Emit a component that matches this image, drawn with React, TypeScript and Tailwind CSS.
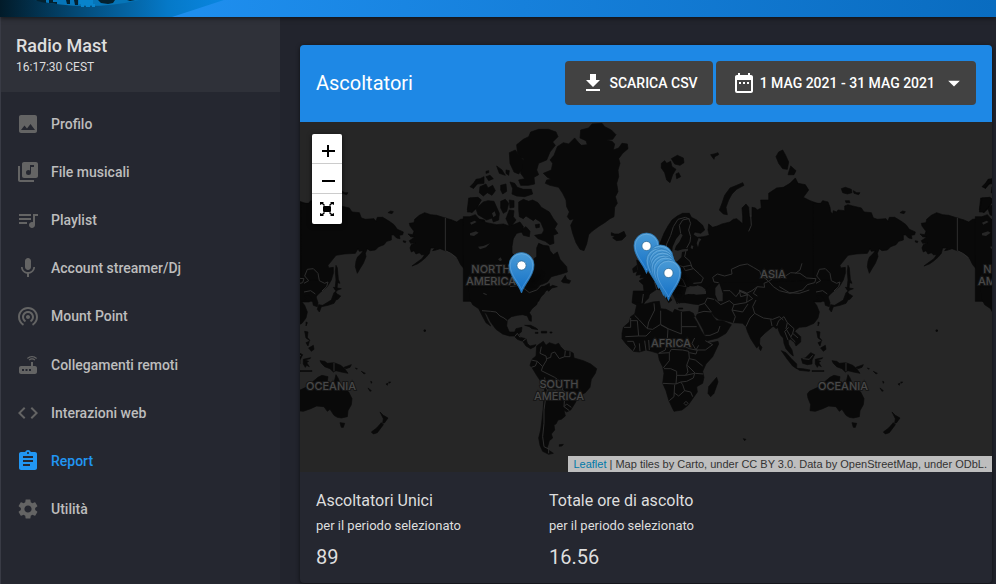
import type { ComponentType } from "react";
import {
  MdArrowDropDown,
  MdAssignment,
  MdCode,
  MdDateRange,
  MdGetApp,
  MdImage,
  MdLibraryMusic,
  MdMic,
  MdQueueMusic,
  MdRouter,
  MdSettings,
  MdWifiTethering,
} from "react-icons/md";

type IconType = ComponentType<{ className?: string }>;

const menu: { label: string; Icon: IconType; active?: boolean }[] = [
  { label: "Profilo", Icon: MdImage },
  { label: "File musicali", Icon: MdLibraryMusic },
  { label: "Playlist", Icon: MdQueueMusic },
  { label: "Account streamer/Dj", Icon: MdMic },
  { label: "Mount Point", Icon: MdWifiTethering },
  { label: "Collegamenti remoti", Icon: MdRouter },
  { label: "Interazioni web", Icon: MdCode },
  { label: "Report", Icon: MdAssignment, active: true },
  { label: "Utilità", Icon: MdSettings },
];

const stats = [
  { title: "Ascoltatori Unici", value: "89" },
  { title: "Totale ore di ascolto", value: "16.56" },
];

interface Tile {
  x: number;
  y: number;
  land: string[];
  water?: string[];
  borders?: string[];
}

// Each tile is drawn at three units per map pixel, from its own top left corner.
const tiles: Tile[] = [
  {
    // Canada, Greenland, Iceland
    x: 470,
    y: 120,
    land: [
      "220,160 244,150 248,130 240,120 252,106 262,80 280,68 296,72 314,54 326,68 334,76 352,74 348,62 330,54 332,30 356,24 366,12 396,10 404,20 424,30 438,44 428,58 408,60 426,64 434,72 430,90 446,84 456,70 472,72 474,86 458,100 446,116 450,130 444,150 446,170 440,190 444,215 436,230 442,250 434,262 432,290 420,296 404,308 388,318 366,334 356,344 350,372 342,392 330,388 318,368 308,340 302,316 312,296 300,300 292,290 298,276 290,260 288,240 278,220 266,202 240,196 226,190 230,180 244,178 232,172",
      "140,74 160,58 176,50 182,36 206,28 236,28 258,36 264,50 248,66 256,76 240,96 230,120 206,130 200,150 206,164 192,172 194,192 176,196 152,196 146,180 164,176 152,160 154,140 162,116 150,112 142,96",
      "118,98 136,90 148,108 160,120 156,148 146,162 132,156 120,130",
      "120,186 134,190 142,202 160,208 184,208 188,222 164,230 140,228 126,222 128,206",
      "80,138 96,150 106,166 88,160",
      "108,150 118,152 116,166 108,160",
      "92,196 108,192 110,214 98,222 92,210",
      "30,200 48,192 54,204 68,196 76,212 66,226 52,218 40,228 28,218",
      "48,170 60,166 70,176 56,182",
      "48,154 56,152 56,158 48,160",
      "0,200 22,178 32,180 20,192 8,204",
      "0,234 24,232 34,240 20,262 4,276 -8,276",
      "18,266 40,246 54,242 72,244 80,262 88,280 86,300 70,306 66,294 50,300 34,290 24,284",
      "92,244 106,238 116,250 110,274 100,280 92,264",
      "118,240 132,242 132,262 120,264",
      "146,246 160,238 176,244 188,240 204,248 214,262 238,276 250,296 262,312 254,326 264,340 250,346 252,370 240,374 226,364 204,356 194,346 216,342 222,330 212,306 196,296 190,302 168,288 160,296 148,290 146,268",
      "152,330 168,320 180,334 178,350 160,346",
      "196,314 208,312 208,322 198,324",
      "-20,290 0,290 16,284 30,300 50,308 80,314 100,312 118,318 108,296 118,270 132,272 130,290 138,300 126,316 150,306 160,320 156,336 140,340 130,356 126,380 126,400 140,412 160,418 180,424 188,438 194,434 192,416 200,410 200,384 206,370 220,376 236,378 240,392 250,404 262,396 270,418 290,440 292,456 274,462 244,470 232,486 210,496 190,508 176,518 200,506 224,498 238,490 240,506 220,516 206,544 0,544 -20,544",
      "274,484 286,466 290,478 302,482 298,490 280,488",
      "230,506 248,496 262,500 246,504 236,514",
      "424,338 434,342 446,342 462,334 468,348 456,360 440,362 428,354 434,348 424,346",
      "488,446 500,436 502,454 490,458",
      "510,420 524,436 532,452 540,470 510,474 516,456",
    ],
    water: [
      "0,340 18,334 26,338 12,348 0,346",
      "24,380 40,378 60,370 48,382 30,388",
      "84,418 92,412 96,420 90,424",
      "146,498 160,496 174,502 160,506",
      "0,308 14,302 20,306 4,314",
      "66,280 74,274 78,286 70,292",
    ],
    borders: ["120,500 150,496 178,518 200,510 214,496", "40,520 50,524"],
  },
  {
    // Europe and western Asia
    x: 640,
    y: 120,
    land: [
      "46,408 52,390 60,370 72,340 84,318 96,300 112,288 128,280 148,280 154,292 170,300 188,316 194,330 182,340 164,336 160,344 172,352 190,350 208,346 204,330 206,312 218,322 232,318 246,312 270,306 280,298 290,296 302,306 308,312 308,288 306,264 318,252 326,262 328,290 336,292 336,262 346,264 352,270 364,264 362,240 386,240 386,220 410,204 430,202 450,190 466,174 474,190 496,194 506,210 490,232 510,242 532,250 544,252 544,546 118,548 114,530 108,536 112,552 102,530 92,510 76,500 72,505 82,522 96,540 86,548 76,530 62,510 50,508 32,520 18,534 10,556 -6,557 -24,548 -20,513 12,513 10,495 -3,483 20,470 35,453 60,445 52,418",
      "64,130 74,122 80,130 92,124 96,140 108,148 98,164 90,188 80,180 74,158 64,144",
      "94,116 112,106 130,114 132,128 120,136 104,132",
      "108,162 116,158 122,170 110,176",
      "212,104 222,102 234,98 236,104 224,110 222,118 216,110",
      "308,188 312,196 290,208 276,222 266,240 258,262 262,284 250,282 238,270 246,250 254,226 270,204 290,196",
      "408,110 416,96 428,90 436,104 446,126 442,148 428,146 416,130",
      "452,138 468,152 462,164 444,164",
      "-10,420 0,426 8,446 20,456 0,464 -12,466 -6,448",
    ],
    water: [
      "122,340 128,346 118,366 108,378 104,390 114,392 128,388 144,386 144,392 126,396 124,412 112,424 94,428 88,438 76,434 92,424 96,400 98,380 108,358",
      "140,508 150,498 164,502 172,496 186,500 206,516 200,524 176,522 152,524 140,522",
      "220,494 236,488 246,500 236,508 242,524 250,546 232,546 230,520",
      "176,354 184,358 178,366 174,382 170,370",
      "154,376 160,378 158,388 152,384",
      "290,502 300,500 302,510 292,510",
    ],
    borders: [
      "78,404 80,372 92,346 100,320 114,298 136,292 150,298",
      "122,340 118,316 128,300 146,296 152,310 146,330 152,350 150,366 140,384",
      "138,392 134,410 150,424 156,442 178,462 190,474 184,488 160,490",
      "106,434 130,440 152,436 156,442",
      "106,440 108,468 128,478 138,500",
      "108,468 86,472 70,462 72,440",
      "86,472 92,490 116,496 138,500",
      "50,508 44,486 60,476 72,462",
      "160,446 136,452 130,440",
      "236,488 222,486 218,472 232,462 254,468 276,462 274,448 300,436 322,432 340,442 360,454 362,464 386,484",
      "386,484 372,490 374,502 352,500 336,512 320,520 300,514 288,530 270,512 250,512",
      "386,484 400,474 430,472 452,458 480,460 500,474 528,476 524,488 502,494 488,510 450,520 418,512 400,500 386,484",
      "466,460 480,450 486,430",
      "326,334 334,316 332,286",
      "300,514 322,524 320,546",
      "352,500 340,520 352,528",
    ],
  },
  {
    // Eastern Siberia, Alaska
    x: 816,
    y: 120,
    land: [
      "-8,250 14,250 20,242 36,246 42,262 44,276 50,282 52,272 62,276 66,270 86,272 86,258 96,254 110,258 136,264 144,276 166,278 172,294 184,298 210,296 216,304 220,292 236,292 256,304 270,314 280,328 298,336 296,344 286,346 288,356 278,354 268,344 262,346 262,360 248,364 240,374 224,380 214,390 198,392 190,386 184,400 186,410 178,430 168,446 160,460 154,440 156,424 160,412 172,400 178,392 166,394 162,386 154,400 120,402 96,406 72,436 74,444 88,442 88,460 82,480 70,500 54,513 38,526 30,544 -8,544",
      "96,436 100,444 103,478 108,490 101,488 98,514 93,508 96,480 94,455",
      "96,520 110,528 102,538 90,540",
      "76,206 88,202 106,208 108,218 94,222 80,218",
      "112,212 122,218 132,218 128,224 114,220",
      "88,242 100,242 102,248 90,248",
      "252,278 260,273 268,275 264,281",
      "312,342 326,344 330,334 318,318 316,310 330,308 332,298 346,286 362,278 380,284 398,286 424,294 444,300 458,306 470,298 484,296 490,300 500,290 506,296 528,298 542,300 542,544 500,544 496,500 498,480 492,462 480,446 470,434 462,418 452,406 440,398 424,392 408,386 396,390 386,392 392,384 380,384 376,400 366,412 352,424 340,432 324,438 340,426 354,416 362,404 352,404 346,398 336,402 330,392 322,396 318,384 322,374 334,368 320,370 316,362 332,352 320,350",
      "504,200 516,178 528,176 540,170 540,190 520,192 508,206",
      "494,234 520,234 530,240 520,262 504,278 490,270",
      "298,362 306,364 304,368 298,366",
    ],
    water: ["494,340 506,332 524,334 516,344 500,348"],
    borders: [
      "424,294 424,392 440,400 458,414",
      "0,490 14,482 2,468 10,448 28,446 42,460 46,482 62,490 72,486 68,500 54,513",
      "0,516 20,512 34,522",
    ],
  },
  {
    // United States, Mexico, South America
    x: 296,
    y: 290,
    land: [
      "518,-10 520,24 530,44 548,56 558,76 570,98 584,108 574,90 564,66 572,72 584,96 600,118 620,132 640,138 654,138 664,148 680,154 690,168 704,176 716,170 720,164 702,168 694,160 690,146 672,142 668,132 676,126 678,112 660,116 656,126 640,126 632,108 634,90 646,80 664,76 680,74 694,78 700,92 706,94 706,78 700,68 708,56 722,44 728,26 744,12 756,-10",
      "686,106 704,106 720,114 726,119 708,116 700,110",
      "736,124 752,124 752,129 736,129",
      "718,127 726,127 726,130 718,130",
      "762,126 768,126 768,129 762,129",
      "722,168 742,154 750,166 760,158 778,164 788,160 794,170 806,182 822,184 832,190 834,204 862,212 884,222 902,236 898,250 886,268 882,292 868,308 848,318 838,338 824,360 812,366 804,360 808,378 796,388 786,390 780,402 774,404 776,420 766,432 770,444 760,452 756,466 752,476 772,490 758,493 740,484 732,466 728,444 734,420 738,390 742,350 744,320 746,290 734,274 722,256 710,236 702,226 708,208 720,198",
      "790,464 802,463 798,468 790,469",
      "384,120 388,120 388,124 384,124",
    ],
    borders: [
      "558,62 584,64 600,66 612,78 624,84 634,92",
      "656,140 664,130 672,142",
      "680,154 690,146",
      "736,170 732,190 750,198 752,210 740,230 736,242 756,252 776,262 800,280 800,300 816,316",
      "752,206 764,202 766,190 776,186 790,206 806,200 808,182",
      "806,200 822,200 822,184",
      "706,210 724,214 718,228 706,232",
      "724,214 740,230",
      "746,262 748,290 754,300 748,330 744,360 744,400 740,440 744,470 756,476",
      "754,300 776,300 800,300",
      "776,300 790,318 806,322 804,350 820,362",
      "804,350 812,342 826,352",
      "758,474 758,490",
    ],
  },
  {
    // Africa, southern Asia, Oceania
    x: 646,
    y: 290,
    land: [
      "-72,130 -68,112 -50,96 -46,80 -34,72 -28,46 -10,44 20,36 40,34 44,56 60,58 80,68 86,58 108,66 130,64 142,70 146,80 142,80 152,96 164,120 178,142 188,160 216,154 218,162 200,200 180,222 170,244 174,262 170,280 152,290 154,306 140,326 126,346 108,360 84,364 78,352 68,330 60,302 50,280 54,250 50,230 40,210 36,190 16,184 0,180 -20,186 -38,184 -58,164 -72,146",
      "212,262 216,276 204,310 194,320 186,310 188,290 198,278",
      "-36,8 12,4 8,24 -8,40 -36,36",
      "112,30 116,12 140,14 170,8 200,-20 560,-30 576,-16 560,4 546,20 552,38 550,50 538,46 534,26 524,14 510,18 518,26 502,34 512,46 520,66 516,84 504,100 480,110 460,112 452,118 446,124 464,140 464,156 450,168 446,158 434,148 426,150 428,164 438,180 442,198 434,192 420,176 414,160 412,144 404,136 398,122 394,108 380,110 356,130 342,144 340,166 332,174 314,146 304,124 300,110 290,100 262,98 240,92 218,88 206,80 192,62 200,78 212,92 230,92 256,104 240,130 216,144 184,152 178,140 172,120 160,98 150,80 158,64 160,44 140,42 120,38",
      "90,10 108,10 104,22 96,24 100,40 92,34",
      "98,54 110,54 110,57 98,57",
      "340,162 348,172 344,182 340,176",
      "406,182 420,188 436,206 452,222 452,236 440,228 424,208",
      "452,235 470,236 492,240 490,244 460,241",
      "466,206 478,204 494,188 506,194 498,210 498,222 484,224 470,220",
      "508,208 530,203 528,206 512,210 524,214 518,218 526,230 518,226 514,232 508,222",
      "498,242 534,242 534,244 498,244",
      "558,212 572,214 580,220 600,218 620,226 632,236 642,250 622,246 606,242 598,246 588,236 572,230 562,220",
      "630,232 652,224 648,232 636,236",
      "512,124 522,126 520,142 528,152 516,144",
      "524,174 538,166 540,178 532,184",
      "516,158 526,154 522,168",
      "516,96 520,98 516,108",
      "384,110 392,104 396,112 390,116",
      "554,44 566,46 576,40 592,30 600,8 606,4 606,30 600,40 582,46 562,50 556,66 550,58",
      "598,-8 622,-4 606,2",
      "484,312 490,304 516,292 530,280 540,272 552,262 564,256 582,260 580,272 594,282 602,270 606,254 612,264 618,278 632,296 644,306 654,326 652,344 642,362 640,380 622,384 610,382 600,376 588,358 580,364 570,350 548,348 530,356 508,364 492,362 494,344 486,324",
      "618,398 632,400 628,412 622,412",
      "738,366 748,376 762,384 752,398 746,400 748,386",
      "742,398 748,404 730,428 718,432 712,426 728,414",
      "664,234 670,236 668,238",
      "682,244 694,250 690,252",
      "702,294 712,302 708,304",
      "756,282 762,280 760,286",
      "710,274 714,276 712,280",
      "764,276 770,276 766,280",
      "292,446 300,448 296,452",
      "871,120 874,120 874,123 871,123",
    ],
    water: [
      "116,14 122,-8 150,-12 180,2 180,12 150,14 138,10",
      "208,-6 220,-20 230,10 230,34 216,34 208,14",
    ],
    borders: [
      "-34,76 -20,90 4,116 20,118 42,104",
      "24,40 26,60 8,96 4,116",
      "44,62 44,104 66,116 64,146 54,150",
      "106,66 106,110 152,110",
      "44,104 66,116 106,132 106,110",
      "-66,112 -46,112 -46,84",
      "-46,92 -26,92 -22,138 -62,140",
      "-22,138 0,138 14,124",
      "-56,154 -38,154 -32,170 -38,182",
      "-20,160 -18,184",
      "-4,152 0,182",
      "8,150 10,180",
      "64,146 58,180 38,190",
      "98,150 112,168 130,176 150,180 158,166",
      "146,144 138,160 150,180 178,180 200,164 178,152",
      "38,190 70,188 76,178 110,180 128,184 130,204 122,226 126,246 118,256",
      "70,188 70,212 52,234",
      "130,188 150,192 154,180",
      "130,206 148,210 170,228",
      "124,226 148,250 172,252",
      "54,236 74,236 92,244 92,256 118,256 146,250",
      "50,280 90,282 104,276 122,274 142,264 146,250",
      "92,256 90,282",
      "86,284 84,320 70,332",
      "84,308 98,318 116,302 110,284 104,276",
      "116,302 134,306 140,320",
      "120,334 126,340 120,346 114,340 120,334",
      "158,46 176,40 196,66",
      "152,70 174,64 196,66",
      "178,136 192,136 216,126 222,108",
      "176,40 184,24 204,28",
      "206,28 224,44 250,32 264,44 258,60 268,80 262,98",
      "264,44 300,38 320,26 300,8 280,0",
      "258,60 290,66 306,42",
      "300,110 312,84 326,70 320,50 330,30",
      "326,70 352,84 380,88 400,80 412,90",
      "374,88 378,108",
      "392,108 398,92 414,80 424,98 420,116 434,140",
      "424,98 444,116 440,130 456,144",
      "428,112 416,124 426,150",
      "440,130 434,142 448,156",
      "600,218 600,244",
      "-8,12 -12,40",
      "400,-10 430,8 460,10 490,0",
      "470,206 490,208 500,196",
      "280,0 284,20 306,14",
    ],
  },
];

const places: { lines: string[]; x: number; y: number }[] = [
  { lines: ["NORTH", "AMERICA"], x: 491, y: 273 },
  { lines: ["SOUTH", "AMERICA"], x: 559, y: 388 },
  { lines: ["AFRICA"], x: 671, y: 347 },
  { lines: ["ASIA"], x: 773, y: 278 },
  { lines: ["OCEANIA"], x: 843, y: 390 },
];

// Tips of the pins, drawn from north to south.
const pins = [
  [646.5, 273.5],
  [660.5, 285.5],
  [658.5, 288.5],
  [661.5, 289.5],
  [662.5, 292.5],
  [663.5, 295.5],
  [665.5, 297.5],
  [521.5, 293],
  [668.5, 300.5],
];

const copies = [-512, 0, 512];

function Pin({ x, y }: { x: number; y: number }) {
  return (
    <g transform={`translate(${x} ${y})`}>
      <path
        d="M0 0 C-3 -9 -12.500 -17 -12.500 -28 A12.500 12.500 0 0 1 12.500 -28 C12.500 -17 3 -9 0 0Z"
        fill="url(#pin)"
        stroke="#2e7ab5"
        strokeWidth="0.7"
      />
      <path
        d="M0 -3.500 C-3 -11 -11.300 -18 -11.300 -28 A11.300 11.300 0 0 1 11.300 -28 C11.300 -18 3 -11 0 -3.500Z"
        fill="none"
        stroke="#ffffff"
        strokeOpacity="0.16"
      />
      <circle cy="-27.500" r="4.600" fill="#ffffff" stroke="#2e6c97" strokeWidth="0.8" />
    </g>
  );
}

function WorldMap() {
  return (
    <svg
      className="block h-full w-full"
      viewBox="300 122 692 350"
      preserveAspectRatio="xMidYMid slice"
      role="img"
      aria-label="Mappa degli ascoltatori"
    >
      <defs>
        <linearGradient id="pin" x1="0" y1="0" x2="0" y2="1">
          <stop offset="0" stopColor="#4a9bd6" />
          <stop offset="1" stopColor="#126fc6" />
        </linearGradient>
        <radialGradient id="shade">
          <stop offset="0" stopColor="#000000" stopOpacity="0.6" />
          <stop offset="1" stopColor="#000000" stopOpacity="0" />
        </radialGradient>
        <g id="world">
          {tiles.map((t) => (
            <g key={`${t.x}-${t.y}`} transform={`translate(${t.x} ${t.y}) scale(0.33333)`}>
              {t.land.map((p) => (
                <polygon key={p} points={p} fill="#090909" stroke="#090909" strokeWidth="2" strokeLinejoin="round" />
              ))}
              {t.water?.map((p) => (
                <polygon key={p} points={p} fill="#262626" />
              ))}
            </g>
          ))}
          {tiles.map((t) => (
            <g key={`b${t.x}-${t.y}`} transform={`translate(${t.x} ${t.y}) scale(0.33333)`}>
              {t.borders?.map((p) => (
                <polyline key={p} points={p} fill="none" stroke="#2e2e2e" strokeWidth="3" strokeLinejoin="round" />
              ))}
            </g>
          ))}
          {places.map((p) => (
            <text
              key={p.x}
              textAnchor="middle"
              fill="#484848"
              stroke="#161616"
              strokeWidth="2"
              paintOrder="stroke"
              className="font-['Inter',sans-serif] text-[11px] font-medium"
            >
              {p.lines.map((line, i) => (
                <tspan key={line} x={p.x} y={p.y + i * 12}>
                  {line}
                </tspan>
              ))}
            </text>
          ))}
        </g>
      </defs>
      <rect x="-300" y="0" width="1900" height="700" fill="#262626" />
      {copies.map((dx) => (
        <use key={dx} href="#world" x={dx} />
      ))}
      {pins.map(([x, y]) => (
        <ellipse
          key={`s${x}`}
          cx={x + 12}
          cy={y - 13}
          rx="17"
          ry="9"
          fill="url(#shade)"
          fillOpacity="0.6"
          transform={`rotate(-40 ${x + 12} ${y - 13})`}
        />
      ))}
      {pins.map(([x, y]) => (
        <Pin key={x} x={x} y={y} />
      ))}
    </svg>
  );
}

function Banner() {
  return (
    <header className="relative z-10 h-[17px] shrink-0 overflow-hidden bg-[#1e88e5] shadow-[0_1px_5px_rgba(0,0,0,0.6)]">
      <div className="h-full bg-linear-to-r from-[#1e8eee] from-20% to-[#096cc0]">
        <svg className="block h-[17px] w-[230px]" viewBox="0 0 230 17" aria-hidden="true">
          <defs>
            <linearGradient id="night" x1="0" x2="1">
              <stop offset="0" stopColor="#021b29" />
              <stop offset="0.35" stopColor="#034a77" />
              <stop offset="0.75" stopColor="#0579c8" />
              <stop offset="1" stopColor="#0a86e0" />
            </linearGradient>
          </defs>
          <path d="M0 0H224L172 17H0Z" fill="url(#night)" />
          <path d="M34 0Q60 6 87 6Q114 6 140 0Z" fill="#0675b8" />
          <path d="M34 0h12v3l-5-1zM49 0h4v2h4v2l-8-1zM66 0h4v4h-3zM74 0h4v5h-3zM98 0h17l-2 3-5 1-7-1zM127 0h8l-5 1z" fill="#04212f" />
          <path d="M79 0h14v4h2v3h-3v-2h-2v2h-4v-2h-2v2h-3v-3h-2z" fill="#0884cc" />
        </svg>
      </div>
    </header>
  );
}

function Sidebar() {
  return (
    <aside className="w-[280px] shrink-0 border-l border-[#393b45] bg-[#252730] text-[#dedede]">
      <div className="h-[75px] bg-[#2f3139] pt-[17px] pl-[15px]">
        <h1 className="text-lg leading-6 font-medium">Radio Mast</h1>
        <p className="text-xs leading-[18px]">16:17:30 CEST</p>
      </div>
      <nav className="pt-2">
        <ul className="grid h-[433px] auto-rows-fr">
          {menu.map(({ label, Icon, active }) => (
            <li key={label}>
              <a
                href="#"
                className={`flex h-full items-center gap-[11px] pl-[15px] text-sm font-medium ${active ? "text-[#2196f3]" : "text-[#bdbdbd]"}`}
              >
                <Icon className={active ? "size-6" : "size-6 text-[#646464]"} />
                {label}
              </a>
            </li>
          ))}
        </ul>
      </nav>
    </aside>
  );
}

function MapControls() {
  const button = "flex h-[30px] w-full items-center justify-center bg-white text-black";
  return (
    <div className="absolute top-3 left-3 w-[30px] divide-y divide-[#cccccc] overflow-hidden rounded-xs shadow-[0_1px_5px_rgba(0,0,0,0.65)]">
      <button type="button" aria-label="Zoom in" className={button}>
        <svg className="size-[30px]" viewBox="0 0 30 30" stroke="currentColor" strokeWidth="2">
          <path d="M10 17H23M16 11V23" />
        </svg>
      </button>
      <button type="button" aria-label="Zoom out" className={button}>
        <svg className="size-[30px]" viewBox="0 0 30 30" stroke="currentColor" strokeWidth="2">
          <path d="M10 17H23" />
        </svg>
      </button>
      <button type="button" aria-label="Schermo intero" className={button}>
        <svg className="size-[30px]" viewBox="0 0 30 30" fill="currentColor">
          <rect x="11" y="12" width="8" height="6" rx="1" />
          <path d="M8 8h4l-1 1 2 2-1 1-2-2-2 1zM22 8h-4l1 1-2 2 1 1 2-2 2 1zM8 22h4l-1-1 2-2-1-1-2 2-2-1zM22 22h-4l1-1-2-2 1-1 2 2 2-1z" />
        </svg>
      </button>
    </div>
  );
}

export default function App() {
  return (
    <div className="flex min-h-screen flex-col bg-[#22242d] font-['Roboto',sans-serif]">
      <Banner />
      <div className="flex flex-1">
        <Sidebar />
        <main className="min-w-0 flex-1 pt-7 pr-1 pb-px pl-5">
          <section className="overflow-hidden rounded-sm bg-[#252730] text-[#dedede] shadow-[0_1px_4px_rgba(0,0,0,0.6)]">
            <div className="flex items-center justify-between bg-[#1e88e5] px-4 pt-4 pb-[17px] text-white">
              <h2 className="text-xl">Ascoltatori</h2>
              <div className="flex gap-[3px] text-sm font-medium">
                <button type="button" className="flex h-11 items-center gap-1 rounded-sm bg-[#424242] pr-[15px] pl-4">
                  <MdGetApp className="size-6" />
                  SCARICA CSV
                </button>
                <button type="button" className="flex h-11 items-center rounded-sm bg-[#424242] pr-2 pl-4">
                  <MdDateRange className="mr-1 size-6" />
                  1 MAG 2021 - 31 MAG 2021
                  <MdArrowDropDown className="ml-[5px] size-7" />
                </button>
              </div>
            </div>
            <div className="relative h-[350px] overflow-hidden">
              <WorldMap />
              <MapControls />
              <p className="absolute right-0 bottom-0 bg-[#bebebe] px-[5px] font-['Liberation_Sans',sans-serif] text-[11px] leading-4 text-[#333333]">
                <a href="#" className="text-[#0078a8]">
                  Leaflet
                </a>{" "}
                | Map tiles by Carto, under CC BY 3.0. Data by OpenStreetMap, under ODbL.
              </p>
            </div>
            <div className="grid grid-cols-[233px_1fr] px-4 pt-[17px] pb-3">
              {stats.map((s) => (
                <div key={s.title}>
                  <h3 className="text-base leading-6">{s.title}</h3>
                  <p className="mt-[3px] text-[13px] leading-5">per il periodo selezionato</p>
                  <p className="mt-[7px] text-xl leading-7">{s.value}</p>
                </div>
              ))}
            </div>
          </section>
        </main>
      </div>
    </div>
  );
}
